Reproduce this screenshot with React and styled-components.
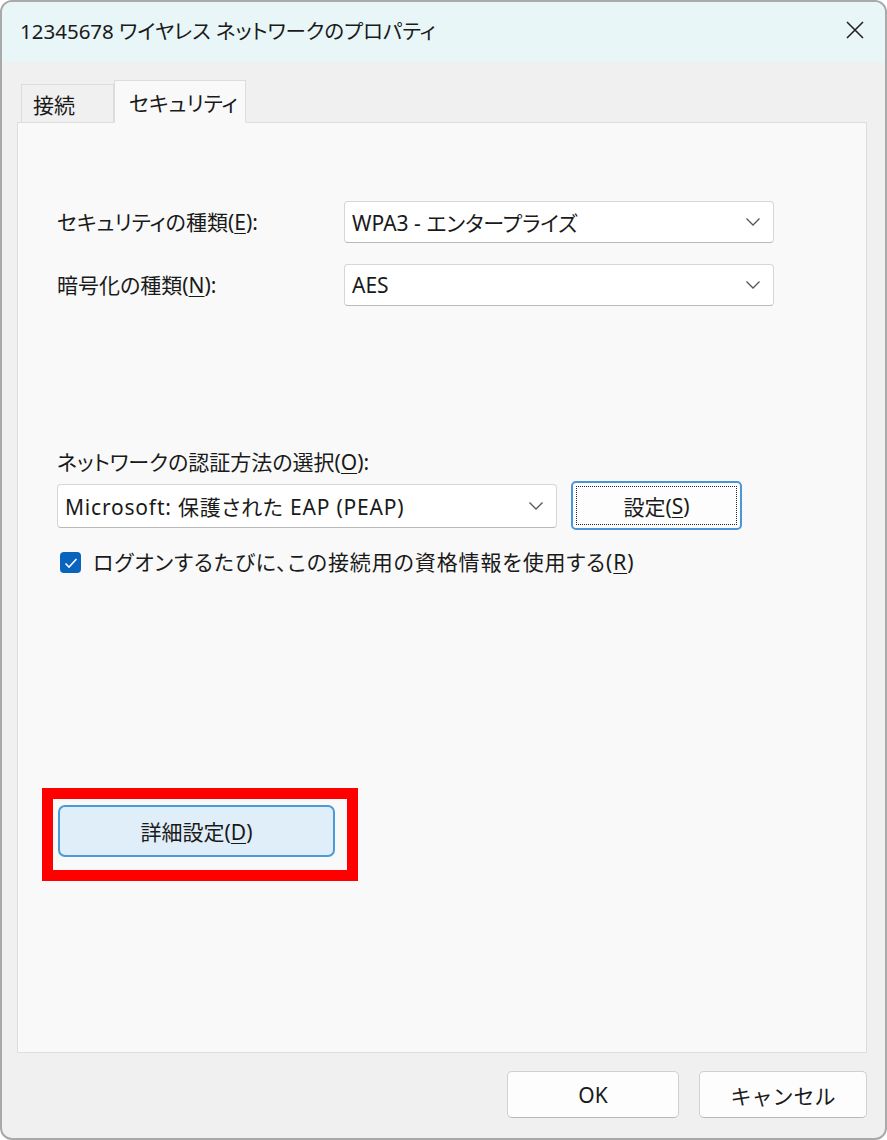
import React from 'react'
import styled, { createGlobalStyle } from 'styled-components'

const GlobalStyle = createGlobalStyle`
  html, body {
    margin: 0;
    padding: 0;
    background: #ffffff;
  }
  body {
    font-family: "Noto Sans", "Noto Sans CJK JP", sans-serif;
    font-feature-settings: "palt";
    color: #1a1a1a;
  }
`

const Window = styled.div`
  width: 887px;
  height: 1140px;
  box-sizing: border-box;
  border: 2px solid #a9a9a9;
  border-radius: 12px;
  overflow: hidden;
  display: flex;
  flex-direction: column;
  background: #f0f0f0;
`

const TitleBar = styled.div`
  height: 60px;
  box-sizing: border-box;
  flex: none;
  display: flex;
  align-items: center;
  justify-content: space-between;
  padding: 0 19px 5px 18px;
  background: #e8f6f8;
  font-size: 20.5px;
`

const CloseButton = styled.button`
  border: 0;
  background: transparent;
  padding: 0;
  width: 22px;
  height: 22px;
  display: flex;
  align-items: center;
  justify-content: center;
`

const Body = styled.div`
  flex: 1;
  display: flex;
  flex-direction: column;
  padding: 18px 18px 0 15px;
`

const TabRow = styled.div`
  display: flex;
  align-items: flex-end;
  padding-left: 4px;
  height: 42px;
  position: relative;
  z-index: 1;
`

const Tab = styled.div`
  box-sizing: border-box;
  height: ${p => (p.$active ? '43px' : '38px')};
  width: ${p => (p.$active ? '132px' : '93px')};
  padding-left: ${p => (p.$active ? '14px' : '11px')};
  display: flex;
  align-items: center;
  font-size: 21px;
  background: ${p => (p.$active ? '#f9f9f9' : '#f0f0f0')};
  border: 1px solid #dcdcdc;
  border-bottom: ${p => (p.$active ? '1px solid #f9f9f9' : '0')};
  margin-bottom: ${p => (p.$active ? '-1px' : '0')};
`

const Panel = styled.div`
  height: 931px;
  box-sizing: border-box;
  background: #f9f9f9;
  border: 1px solid #dedede;
  padding: 78px 92px 0 39px;
  display: flex;
  flex-direction: column;
`

const FieldRow = styled.div`
  display: flex;
  align-items: center;
  justify-content: space-between;
  margin-bottom: 21px;
`

const Label = styled.label`
  font-size: 21px;
  line-height: 25px;
`

const Key = styled.span`
  text-decoration: underline;
  text-underline-offset: 3px;
  text-decoration-thickness: 1px;
`

const Select = styled.div`
  box-sizing: border-box;
  width: ${p => p.$w}px;
  height: ${p => p.$h || 42}px;
  background: #ffffff;
  border: 1px solid #d6d6d6;
  border-bottom-color: #b9b9b9;
  border-radius: 4px;
  display: flex;
  align-items: center;
  justify-content: space-between;
  padding: 0 12px 0 7px;
  font-size: 21px;
`

const SelectValue = styled.span`
  letter-spacing: ${p => p.$spacing || 0}px;
`

const AuthBlock = styled.div`
  margin-top: 123px;
  display: flex;
  flex-direction: column;
`

const AuthRow = styled.div`
  display: flex;
  align-items: center;
  gap: 14px;
  margin-top: 6px;
`

const SettingsButton = styled.button`
  box-sizing: border-box;
  width: 171px;
  height: 49px;
  background: #fdfdfd;
  border: 2px solid #4b95d8;
  border-radius: 5px;
  padding: 3px;
  font-family: inherit;
  font-size: 21px;
  color: #1a1a1a;
  display: flex;
`

const FocusRing = styled.span`
  flex: 1;
  border: 1px dotted #222;
  display: flex;
  align-items: center;
  justify-content: center;
`

const CheckRow = styled.div`
  display: flex;
  align-items: center;
  gap: 12px;
  margin-top: 20px;
  padding-left: 3px;
  font-size: 21px;
  line-height: 25px;
`

const CheckLabel = styled.span`
  letter-spacing: 0.9px;
`

const CheckBox = styled.span`
  width: 21px;
  height: 21px;
  border-radius: 4px;
  background: #0a63bd;
  display: flex;
  align-items: center;
  justify-content: center;
  flex: none;
`

const Highlight = styled.div`
  margin-top: 213px;
  margin-left: -15px;
  width: 316px;
  height: 93px;
  box-sizing: border-box;
  border: 11px solid #ff0000;
  padding: 6px 13px 0 5px;
`

const AdvancedButton = styled.button`
  box-sizing: border-box;
  width: 277px;
  height: 52px;
  background: #e0eef9;
  border: 2px solid #4b9ad8;
  border-radius: 7px;
  font-family: inherit;
  font-size: 21px;
  color: #1a1a1a;
`

const Footer = styled.div`
  flex: 1;
  display: flex;
  justify-content: flex-end;
  align-items: flex-start;
  gap: 20px;
  padding-top: 18px;
`

const DialogButton = styled.button`
  box-sizing: border-box;
  width: ${p => p.$w}px;
  height: 47px;
  background: #fdfdfd;
  border: 1px solid #d0d0d0;
  border-bottom-color: #b8b8b8;
  border-radius: 5px;
  font-family: inherit;
  font-size: 21px;
  color: #1a1a1a;
`

const Chevron = () => (
  <svg width="16" height="10" viewBox="0 0 16 10">
    <polyline points="1.5,1.5 8,8 14.5,1.5" fill="none" stroke="#555" strokeWidth="1.3" />
  </svg>
)

const fields = [
  { label: 'セキュリティの種類', key: 'E', value: 'WPA3 - エンタープライズ' },
  { label: '暗号化の種類', key: 'N', value: 'AES' },
]

export default function App() {
  return (
    <>
      <GlobalStyle />
      <Window>
        <TitleBar>
          <span>12345678 ワイヤレス ネットワークのプロパティ</span>
          <CloseButton aria-label="閉じる">
            <svg width="20" height="20" viewBox="0 0 20 20">
              <path d="M2 2 L18 18 M18 2 L2 18" stroke="#222" strokeWidth="1.6" />
            </svg>
          </CloseButton>
        </TitleBar>
        <Body>
          <TabRow>
            <Tab>接続</Tab>
            <Tab $active>セキュリティ</Tab>
          </TabRow>
          <Panel>
            {fields.map(f => (
              <FieldRow key={f.key}>
                <Label>
                  {f.label}(<Key>{f.key}</Key>):
                </Label>
                <Select $w={430}>
                  <SelectValue>{f.value}</SelectValue>
                  <Chevron />
                </Select>
              </FieldRow>
            ))}
            <AuthBlock>
              <Label>
                ネットワークの認証方法の選択(<Key>O</Key>):
              </Label>
              <AuthRow>
                <Select $w={500} $h={44}>
                  <SelectValue $spacing={0.8}>Microsoft: 保護された EAP (PEAP)</SelectValue>
                  <Chevron />
                </Select>
                <SettingsButton>
                  <FocusRing>
                    設定(<Key>S</Key>)
                  </FocusRing>
                </SettingsButton>
              </AuthRow>
              <CheckRow>
                <CheckBox>
                  <svg width="14" height="12" viewBox="0 0 14 12">
                    <polyline points="1.5,6.5 5,10 12.5,2" fill="none" stroke="#fff" strokeWidth="1.6" />
                  </svg>
                </CheckBox>
                <CheckLabel>
                  ログオンするたびに、この接続用の資格情報を使用する(<Key>R</Key>)
                </CheckLabel>
              </CheckRow>
            </AuthBlock>
            <Highlight>
              <AdvancedButton>
                詳細設定(<Key>D</Key>)
              </AdvancedButton>
            </Highlight>
          </Panel>
          <Footer>
            <DialogButton $w={172}>OK</DialogButton>
            <DialogButton $w={168}>キャンセル</DialogButton>
          </Footer>
        </Body>
      </Window>
    </>
  )
}
